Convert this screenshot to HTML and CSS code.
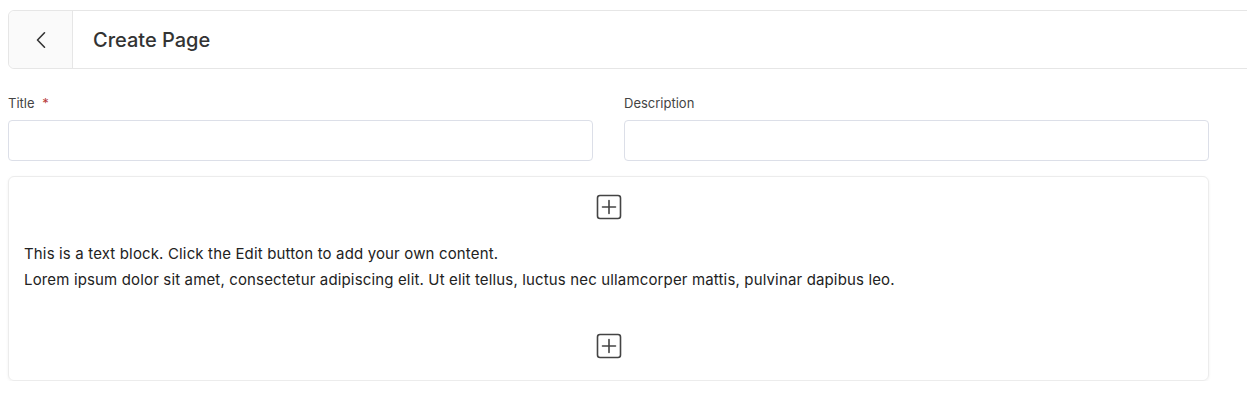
FILE: index.html
```html
<!DOCTYPE html>
<html>
<head>
    <title>Create Page</title>
    <link rel="stylesheet" href="styles.css">
</head>
<body>
    <div id="page">
        <div class="page-header">
            <button class="back-btn" aria-label="Back">
                <svg width="18" height="18" viewBox="0 0 18 18" fill="none" stroke="#333" stroke-width="1.6" stroke-linecap="round" stroke-linejoin="round"><path d="M12.5 1.8 5.5 9l7 7.2"/></svg>
            </button>
            <h1 class="page-title">Create Page</h1>
        </div>

        <div class="form-row">
            <div class="field">
                <label for="title">Title <span class="req">*</span></label>
                <input type="text" id="title">
            </div>
            <div class="field">
                <label for="description">Description</label>
                <input type="text" id="description">
            </div>
        </div>

        <div class="editor">
            <div class="add-row">
                <svg class="add-icon" width="26" height="26" viewBox="0 0 26 26" fill="none" stroke="#444" stroke-width="1.6" stroke-linecap="round"><rect x="1.5" y="1.5" width="23" height="23" rx="2.5"/><path d="M13 6.5v13M6.5 13h13"/></svg>
            </div>
            <div class="text-block">
                <p>This is a text block. Click the Edit button to add your own content.</p>
                <p>Lorem ipsum dolor sit amet, consectetur adipiscing elit. Ut elit tellus, luctus nec ullamcorper mattis, pulvinar dapibus leo.</p>
            </div>
            <div class="add-row add-row-bottom">
                <svg class="add-icon" width="26" height="26" viewBox="0 0 26 26" fill="none" stroke="#444" stroke-width="1.6" stroke-linecap="round"><rect x="1.5" y="1.5" width="23" height="23" rx="2.5"/><path d="M13 6.5v13M6.5 13h13"/></svg>
            </div>
        </div>
    </div>
</body>
</html>
```

FILE: styles.css
```css
body {
    margin: 0;
    font-family: Inter, "Noto Sans", sans-serif;
    color: #222;
    background: #fff;
    overflow: hidden;
}
#page {
    padding: 10px 0 0 8px;
    width: 1201px;
}
.page-header {
    display: flex;
    align-items: stretch;
    height: 57px;
    width: 1260px;
    border: 1px solid #e6e6e6;
    border-radius: 6px 0 0 6px;
    background: #fff;
}
.back-btn {
    width: 64px;
    border: none;
    border-right: 1px solid #e6e6e6;
    border-radius: 6px 0 0 6px;
    background: #fafafa;
    display: flex;
    align-items: center;
    justify-content: center;
    padding: 0;
    cursor: pointer;
}
.page-title {
    margin: 0;
    padding-left: 20px;
    font-size: 20px;
    font-weight: 500;
    color: #333;
    display: flex;
    align-items: center;
}
.form-row {
    display: grid;
    grid-template-columns: 585px 585px;
    column-gap: 31px;
    margin-top: 26px;
}
.field label {
    display: block;
    font-size: 13px;
    color: #444;
    margin-bottom: 8px;
    height: 17px;
    line-height: 17px;
}
.req {
    color: #b83a3a;
    margin-left: 4px;
}
.field input {
    box-sizing: border-box;
    width: 100%;
    height: 41px;
    border: 1px solid #dcdfe8;
    border-radius: 4px;
    font-family: inherit;
    font-size: 14px;
    padding: 0 10px;
    outline: none;
}
.editor {
    margin-top: 15px;
    box-sizing: border-box;
    height: 205px;
    border: 1px solid #ececec;
    border-radius: 6px;
    box-shadow: 0 1px 3px rgba(0, 0, 0, 0.06);
    padding: 17px 15px 0;
}
.add-row {
    display: flex;
    justify-content: center;
    height: 26px;
}
.add-icon {
    margin-left: 1px;
}
.text-block {
    margin-top: 21px;
    font-size: 15px;
    letter-spacing: 0.15px;
    line-height: 26px;
    color: #222;
}
.text-block p {
    margin: 0;
}
.add-row-bottom {
    margin-top: 40px;
}
```
